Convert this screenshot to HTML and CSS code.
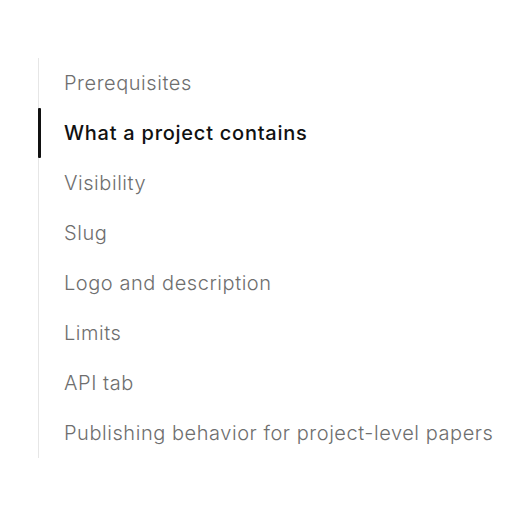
FILE: index.html
```html
<!DOCTYPE html>
<html>
<head>
<meta charset="utf-8">
<link rel="stylesheet" href="styles.css">
</head>
<body>
<nav class="toc">
  <a class="toc-item">Prerequisites</a>
  <a class="toc-item active">What a project contains</a>
  <a class="toc-item">Visibility</a>
  <a class="toc-item">Slug</a>
  <a class="toc-item">Logo and description</a>
  <a class="toc-item">Limits</a>
  <a class="toc-item">API tab</a>
  <a class="toc-item">Publishing behavior for project-level papers</a>
</nav>
</body>
</html>
```
FILE: styles.css
```css
html, body {
  margin: 0;
  padding: 0;
  background: #ffffff;
}
body {
  padding: 58px 0 0 38px;
  font-family: Inter, "Noto Sans", sans-serif;
}
.toc {
  display: flex;
  flex-direction: column;
  border-left: 1px solid #e6e6e6;
  width: max-content;
}
.toc-item {
  position: relative;
  display: flex;
  align-items: center;
  height: 50px;
  padding-left: 25px;
  font-size: 20px;
  font-weight: 350;
  letter-spacing: 0.55px;
  color: #6e6e6e;
  text-decoration: none;
}
.toc-item.active {
  color: #111111;
  font-weight: 470;
  letter-spacing: 0.75px;
}
.toc-item.active::before {
  content: "";
  position: absolute;
  left: -1px;
  top: 0;
  bottom: 0;
  width: 3px;
  background: #111111;
  border-radius: 1px;
}
```
